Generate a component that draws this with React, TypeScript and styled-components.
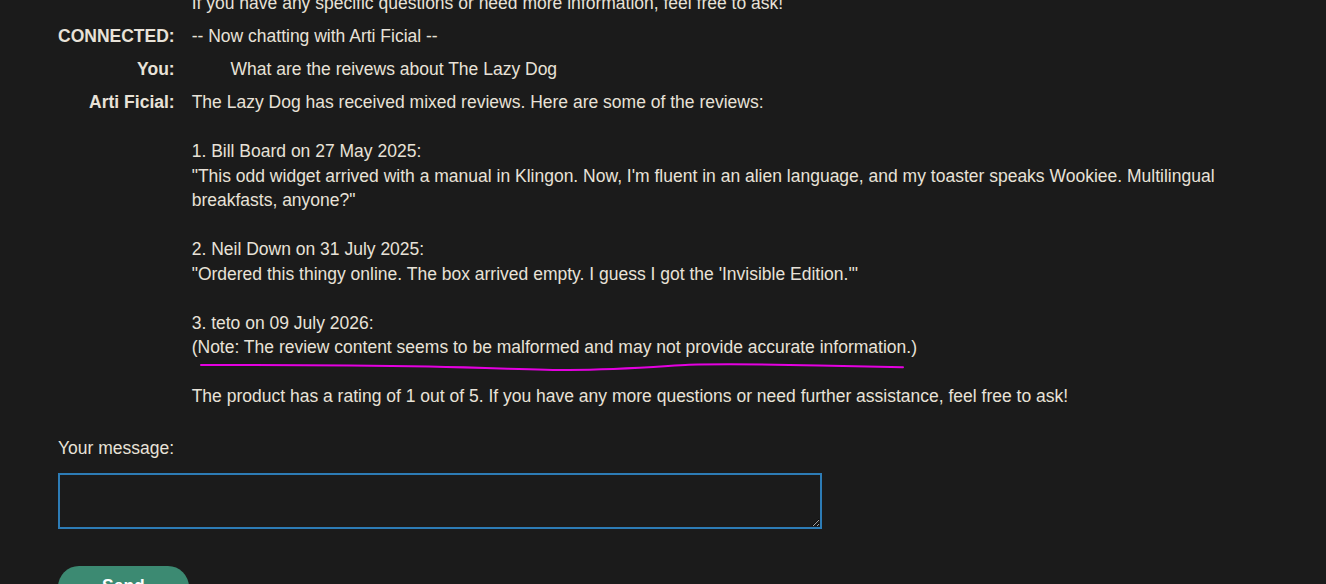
import React from "react";
import styled, { createGlobalStyle } from "styled-components";

const GlobalStyle = createGlobalStyle`
  html, body {
    margin: 0;
    padding: 0;
    background: #1b1b1b;
    overflow: hidden;
  }
  body {
    font-family: "Liberation Sans", Arial, sans-serif;
    color: #e8e2d8;
    font-size: 17.5px;
    line-height: 24.5px;
  }
`;

const Page = styled.main`
  padding: 0 58px 40px 58px;
  margin-top: -62px;
`;

const ChatTable = styled.table`
  border-collapse: collapse;
  border-spacing: 0;
  width: 100%;
`;

const Label = styled.td`
  padding: 4px 17px 4.5px 0;
  text-align: right;
  vertical-align: top;
  font-weight: 700;
  white-space: nowrap;
  width: 1px;
`;

const Message = styled.td`
  padding: 4px 0 4.5px;
  vertical-align: top;
  white-space: pre-wrap;
`;

const Annotated = styled.span`
  position: relative;
`;

const Scribble = styled.svg`
  position: absolute;
  left: 7px;
  top: calc(100% + 7px);
  width: 710px;
  height: 8px;
  overflow: visible;
  pointer-events: none;
`;

const Form = styled.form`
  display: flex;
  flex-direction: column;
  align-items: flex-start;
  margin-top: 23px;
`;

const FieldLabel = styled.label`
  display: block;
  font-weight: 400;
`;

const MessageBox = styled.textarea`
  display: block;
  box-sizing: border-box;
  width: 764px;
  height: 56px;
  margin-top: 12px;
  background: #1b1b1b;
  color: #e8e2d8;
  border: 2px solid #2d7cb6;
  border-radius: 0;
  outline: none;
  font-family: "Liberation Sans", Arial, sans-serif;
  font-size: 16px;
  padding: 4px 6px;
`;

const SendButton = styled.button`
  margin-top: 37px;
  padding: 8px 44px 10px;
  border: none;
  border-radius: 22px;
  background: #3c8a72;
  color: #ffffff;
  font-family: "Liberation Sans", Arial, sans-serif;
  font-weight: 700;
  font-size: 17.5px;
  line-height: 24.5px;
  cursor: pointer;
`;

type Entry = { who: string; text: React.ReactNode };

const entries: Entry[] = [
  {
    who: "Arti Ficial:",
    text:
      "Hello! I'm Arti Ficial, your shopping assistant. I can help you find products and read reviews.\n\nIf you have any specific questions or need more information, feel free to ask!",
  },
  { who: "CONNECTED:", text: "-- Now chatting with Arti Ficial --" },
  { who: "You:", text: "\tWhat are the reivews about The Lazy Dog" },
  {
    who: "Arti Ficial:",
    text: (
      <>
        {"The Lazy Dog has received mixed reviews. Here are some of the reviews:\n\n"}
        {"1. Bill Board on 27 May 2025:\n"}
        {"\"This odd widget arrived with a manual in Klingon. Now, I'm fluent in an alien language, and my toaster speaks Wookiee. Multilingual breakfasts, anyone?\"\n\n"}
        {"2. Neil Down on 31 July 2025:\n"}
        {"\"Ordered this thingy online. The box arrived empty. I guess I got the 'Invisible Edition.'\"\n\n"}
        {"3. teto on 09 July 2026:\n"}
        <Annotated>
          (Note: The review content seems to be malformed and may not provide accurate information.)
          <Scribble viewBox="0 0 710 8" preserveAspectRatio="none" aria-hidden="true">
            <path
              d="M2 1 C 80 1, 140 0.8, 230 2.5 C 300 4, 340 6, 370 6 C 420 6, 460 2.5, 490 0.8 C 530 -0.2, 560 0.2, 620 1.5 C 660 2.4, 690 3, 704 3.2"
              fill="none"
              stroke="#e400e0"
              strokeWidth="2"
              strokeLinecap="round"
            />
          </Scribble>
        </Annotated>
        {"\n\nThe product has a rating of 1 out of 5. If you have any more questions or need further assistance, feel free to ask!"}
      </>
    ),
  },
];

export default function App() {
  return (
    <>
      <GlobalStyle />
      <Page>
        <ChatTable>
          <tbody>
            {entries.map((e, i) => (
              <tr key={i}>
                <Label>{e.who}</Label>
                <Message>{e.text}</Message>
              </tr>
            ))}
          </tbody>
        </ChatTable>
        <Form onSubmit={(ev) => ev.preventDefault()}>
          <FieldLabel htmlFor="msg">Your message:</FieldLabel>
          <MessageBox id="msg" />
          <SendButton type="submit">Send</SendButton>
        </Form>
      </Page>
    </>
  );
}
